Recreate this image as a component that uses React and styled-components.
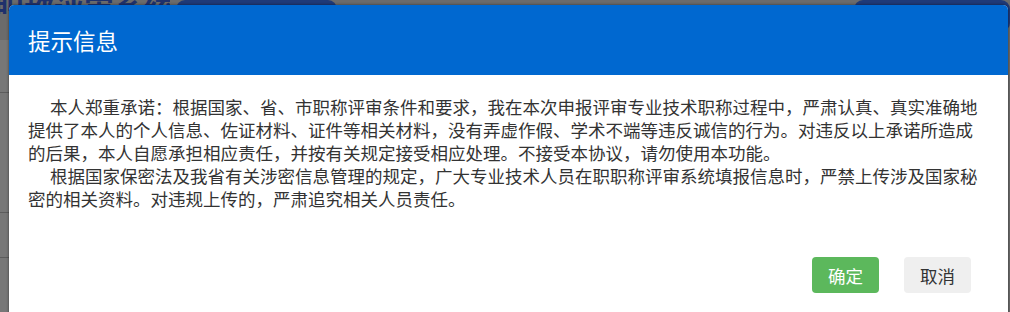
import React from "react";
import styled, { createGlobalStyle } from "styled-components";

const GlobalStyle = createGlobalStyle`
  html, body {
    margin: 0;
    padding: 0;
    overflow: hidden;
  }
  body {
    font-family: "Noto Sans CJK SC", "Noto Sans", sans-serif;
    background: #b2b2b2;
  }
`;

const Page = styled.div`
  position: relative;
  width: 1010px;
  height: 312px;
  overflow: hidden;
  background: #b2b2b2;
`;

const TopBar = styled.div`
  display: flex;
  align-items: flex-start;
  height: 40px;
`;

const SiteTitle = styled.div`
  width: 180px;
  height: 22px;
  margin-left: -6px;
  margin-top: -8px;
  overflow: hidden;
  font-size: 30px;
  line-height: 30px;
  font-weight: bold;
  color: #3452b2;
  white-space: nowrap;
`;

const NavPill = styled.div`
  width: ${({ $w }) => $w}px;
  height: 32px;
  margin-left: ${({ $gap }) => $gap}px;
  background: #3461c8;
  border-radius: 9px;
`;

const SideList = styled.div`
  display: flex;
  flex-direction: column;
  width: 120px;
`;

const SideRow = styled.div`
  height: ${({ $h }) => $h}px;
  background: #c6c6c6;
  border-bottom: 1px solid #9a9a9a;
`;

const Mask = styled.div`
  position: absolute;
  inset: 0;
  background: rgba(0, 0, 0, 0.4);
`;

const Dialog = styled.div`
  position: absolute;
  top: 5px;
  left: 9px;
  width: 999px;
  background: #fff;
  border-radius: 5px 5px 0 0;
  box-shadow: 0 0 3px rgba(0, 0, 0, 0.55);
`;

const DialogHeader = styled.div`
  display: flex;
  align-items: center;
  height: 70px;
  padding: 0 19px;
  background: #0068d0;
  border-radius: 5px 5px 0 0;
  color: #fff;
  font-size: 22.5px;
`;

const DialogBody = styled.div`
  padding: 20px 24px 0 19px;
`;

const Para = styled.p`
  margin: 0;
  text-indent: 22px;
  font-size: 17.5px;
  line-height: 23px;
  color: #333;
`;

const DialogFooter = styled.div`
  display: flex;
  justify-content: flex-end;
  gap: 25px;
  padding: 47px 37px 30px;
`;

const Button = styled.button`
  width: 67px;
  height: 36px;
  padding: 0;
  border: none;
  border-radius: 4px;
  font-family: inherit;
  font-size: 17.5px;
  background: ${({ $primary }) => ($primary ? "#5cb85c" : "#efefef")};
  color: ${({ $primary }) => ($primary ? "#fff" : "#333")};
  cursor: pointer;
`;

export default function App() {
  return (
    <>
      <GlobalStyle />
      <Page>
        <TopBar>
          <SiteTitle>职称评审系统</SiteTitle>
          <NavPill $w={165} $gap={6} />
          <NavPill $w={160} $gap={517} />
        </TopBar>
        <SideList>
          <SideRow $h={52} />
          <SideRow $h={119} />
          <SideRow $h={44} />
          <SideRow $h={60} />
        </SideList>
        <Mask />
        <Dialog>
          <DialogHeader>提示信息</DialogHeader>
          <DialogBody>
            <Para>
              本人郑重承诺：根据国家、省、市职称评审条件和要求，我在本次申报评审专业技术职称过程中，严肃认真、真实准确地提供了本人的个人信息、佐证材料、证件等相关材料，没有弄虚作假、学术不端等违反诚信的行为。对违反以上承诺所造成的后果，本人自愿承担相应责任，并按有关规定接受相应处理。不接受本协议，请勿使用本功能。
            </Para>
            <Para>
              根据国家保密法及我省有关涉密信息管理的规定，广大专业技术人员在职职称评审系统填报信息时，严禁上传涉及国家秘密的相关资料。对违规上传的，严肃追究相关人员责任。
            </Para>
          </DialogBody>
          <DialogFooter>
            <Button $primary>确定</Button>
            <Button>取消</Button>
          </DialogFooter>
        </Dialog>
      </Page>
    </>
  );
}
